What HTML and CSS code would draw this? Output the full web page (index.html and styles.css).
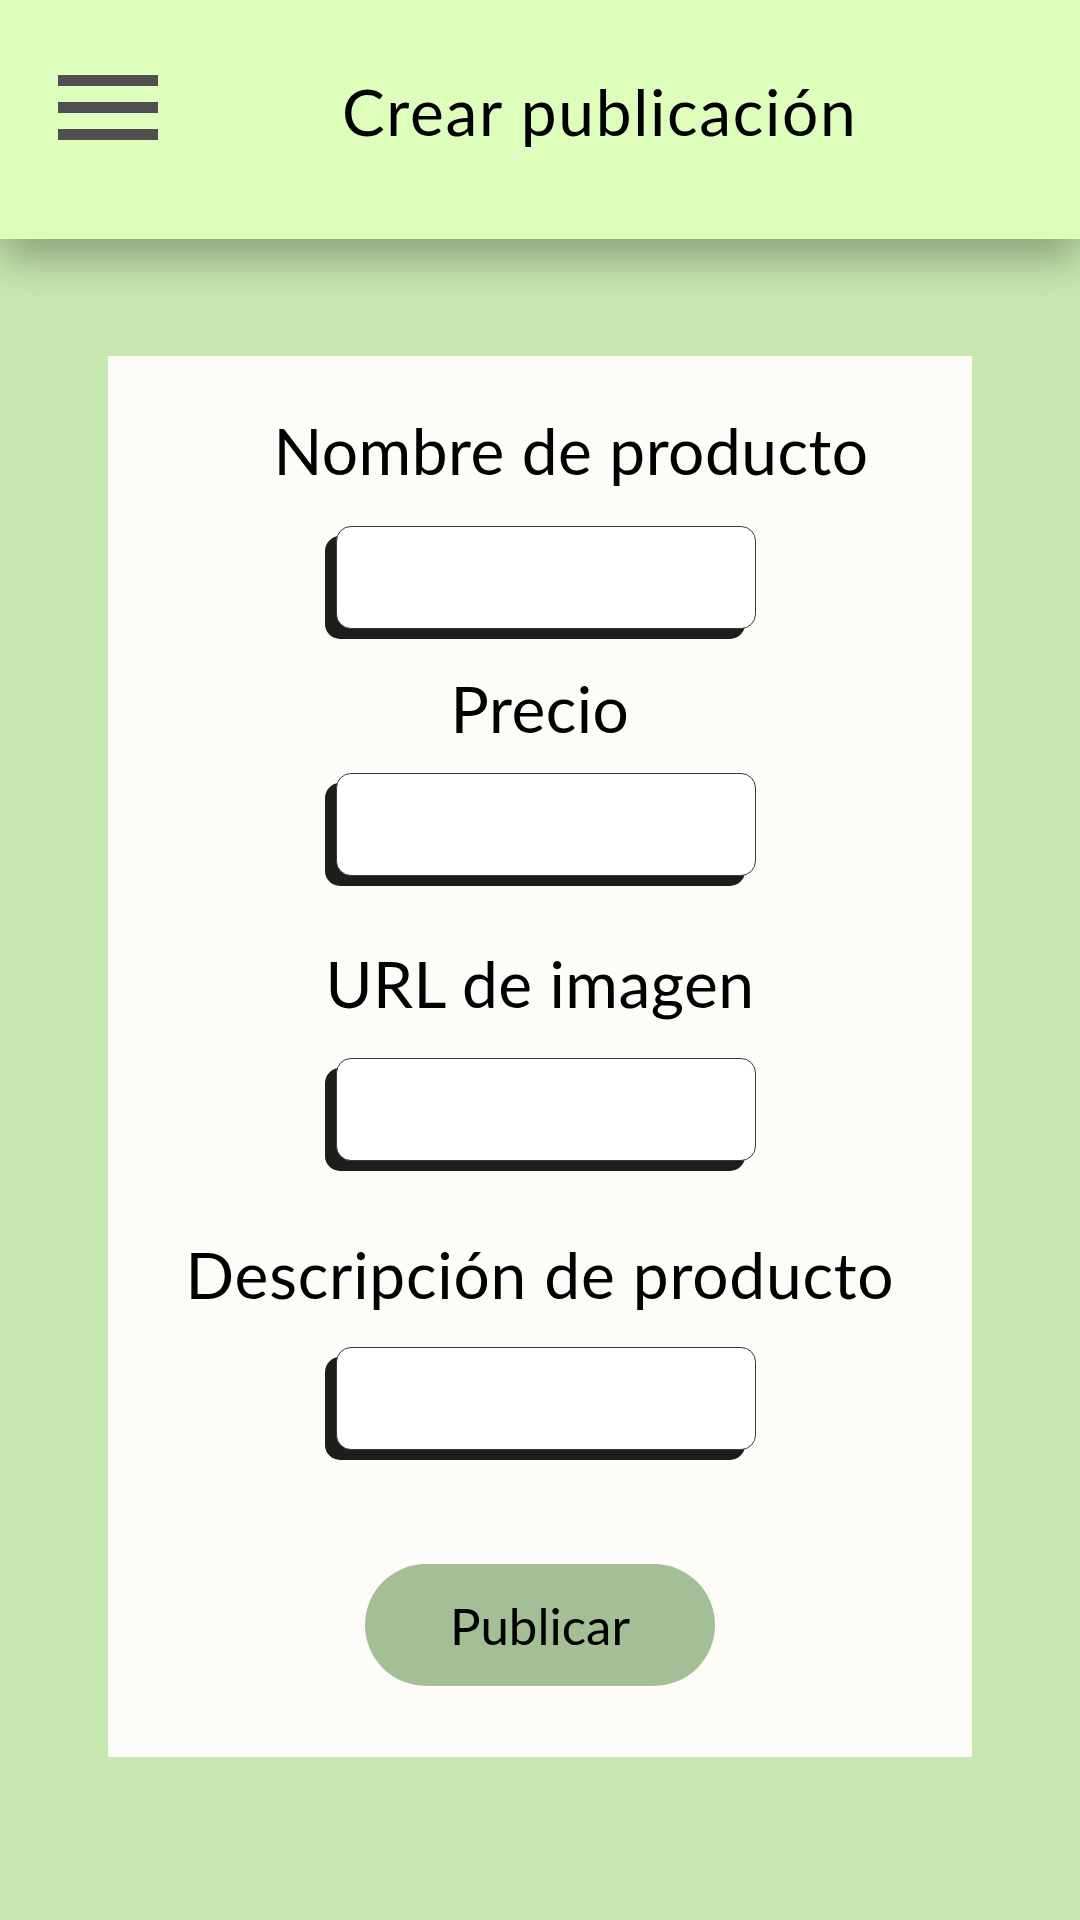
FILE: index.html
```html
<!DOCTYPE html>
<html lang="es">
<head>
<meta charset="utf-8">
<title>Crear publicación</title>
<link rel="stylesheet" href="styles.css">
</head>
<body>
<header class="topbar">
  <div class="burger" aria-label="Menú">
    <span class="bar"></span>
    <span class="bar"></span>
    <span class="bar"></span>
  </div>
  <h1 class="title">Crear publicación</h1>
</header>
<main class="page">
  <form class="card">
    <label class="label label-name" for="nombre">Nombre de producto</label>
    <input class="field field-name" id="nombre" type="text">
    <label class="label label-price" for="precio">Precio</label>
    <input class="field field-price" id="precio" type="text">
    <label class="label label-url" for="url">URL de imagen</label>
    <input class="field field-url" id="url" type="text">
    <label class="label label-desc" for="desc">Descripción de producto</label>
    <input class="field field-desc" id="desc" type="text">
    <button class="publish" type="button">Publicar</button>
  </form>
</main>
</body>
</html>
```
FILE: styles.css
```css
* { box-sizing: border-box; }
html, body {
  margin: 0;
  padding: 0;
}
body {
  width: 1080px;
  min-height: 1920px;
  background: #c7e8b0;
  font-family: "Lato", "Noto Sans", sans-serif;
  font-weight: 400;
  color: #000;
}
.topbar {
  position: relative;
  z-index: 2;
  height: 239px;
  background: #ddffbb;
  display: flex;
  align-items: flex-start;
  padding-left: 58px;
  box-shadow: 0 20px 40px rgba(0, 0, 0, 0.3);
}
.burger {
  margin-top: 75px;
  width: 100px;
  display: flex;
  flex-direction: column;
  gap: 16px;
}
.bar {
  display: block;
  height: 11px;
  background: #505050;
}
.title {
  margin: 80px 0 0 184px;
  font-size: 64px;
  line-height: 64px;
  font-weight: 400;
  letter-spacing: 1.7px;
}
.page {
  padding-top: 117px;
  padding-bottom: 162px;
}
.card {
  width: 864px;
  margin: 0 auto;
  background: #fdfcf8;
  display: flex;
  flex-direction: column;
  align-items: center;
  padding: 63px 0 71px;
}
.label {
  font-size: 64px;
  line-height: 64px;
  white-space: nowrap;
  letter-spacing: 0.5px;
}
.label-name { margin-left: 62px; }
.label-price { margin-top: 48px; }
.label-url { margin-top: 76px; }
.label-desc { margin-top: 82px; letter-spacing: 0.8px; }
.field {
  width: 420px;
  height: 103px;
  margin-left: 11px;
  border: 1px solid #3a3a3a;
  border-radius: 15px;
  background: #fff;
  box-shadow: -11px 10px 0 #1f1d1c;
  font: inherit;
  font-size: 40px;
  padding: 0 20px;
  outline: none;
}
.field-name { margin-top: 43px; }
.field-price { margin-top: 32px; }
.field-url { margin-top: 42px; }
.field-desc { margin-top: 40px; }
.publish {
  margin-top: 114px;
  width: 350px;
  height: 122px;
  border: none;
  border-radius: 61px;
  background: #a4bf95;
  font-family: inherit;
  font-weight: 400;
  font-size: 51px;
  color: #000;
  padding: 0;
}
```
